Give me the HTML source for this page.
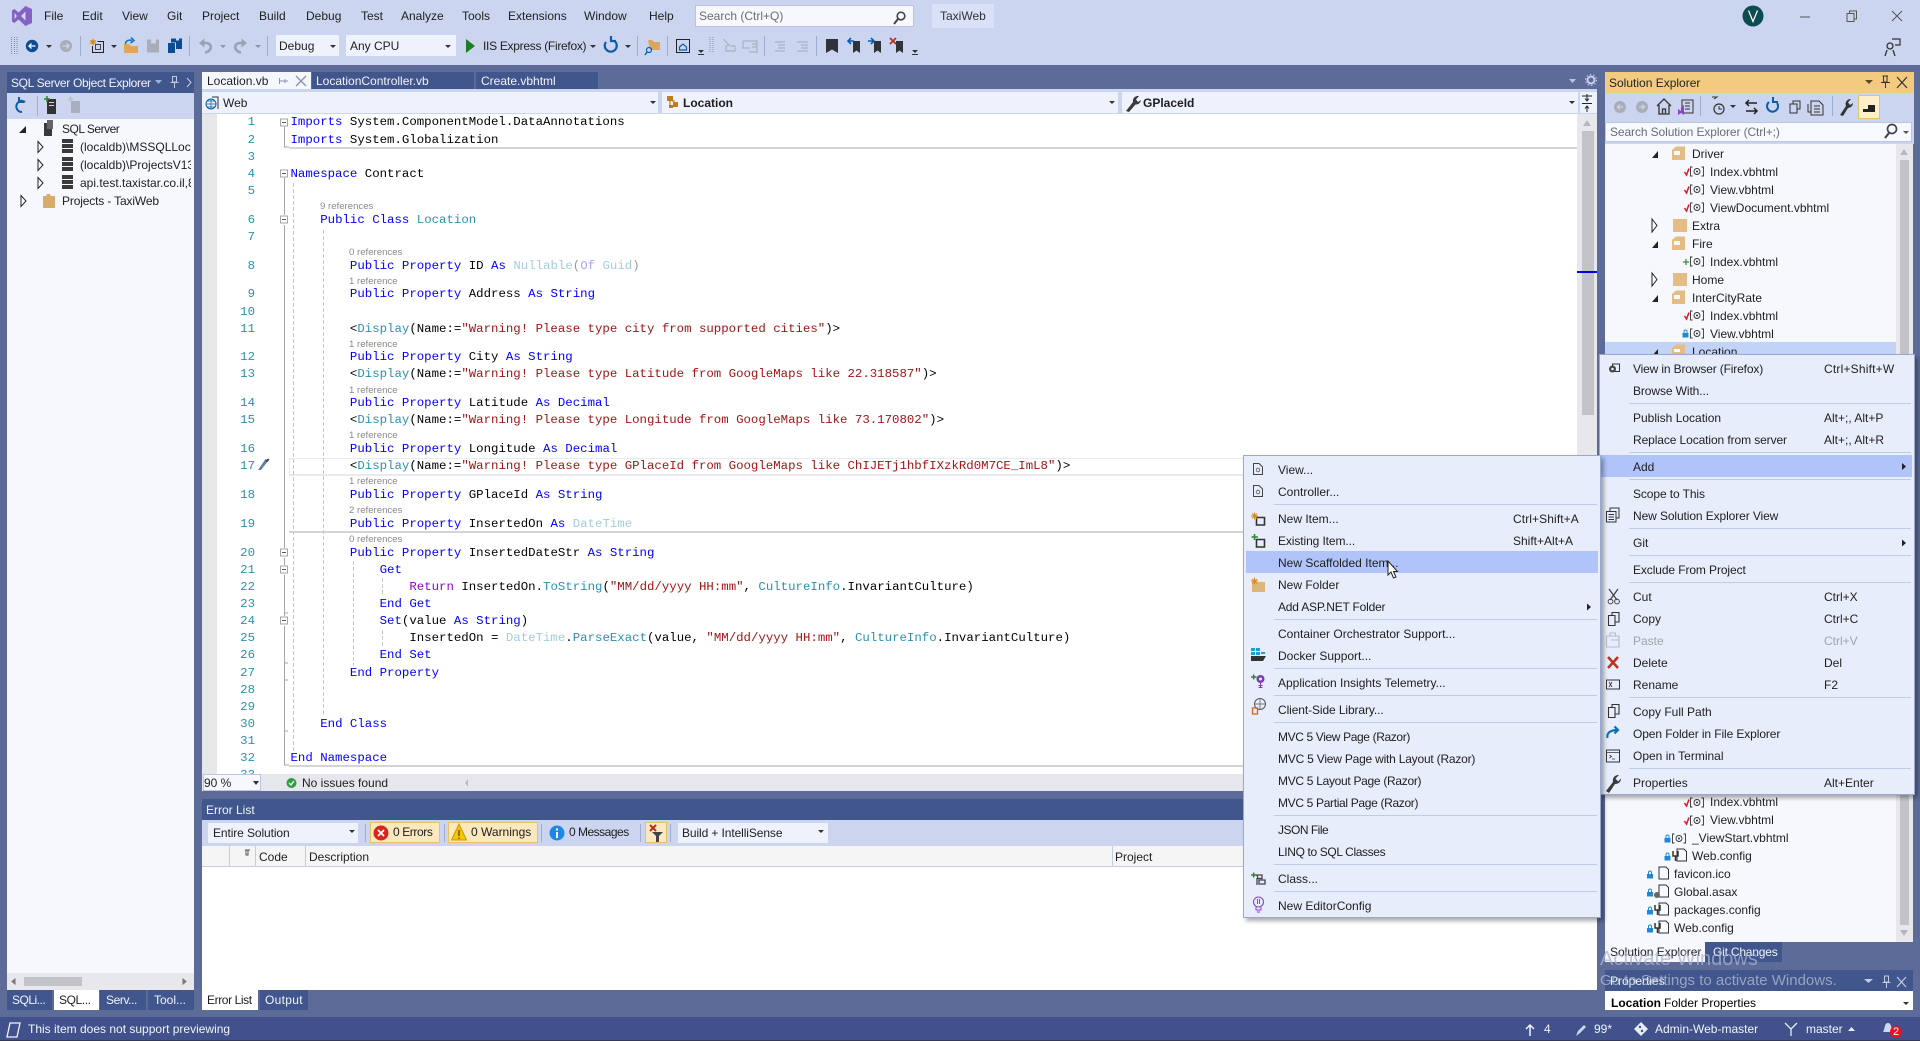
<!DOCTYPE html>
<html><head><meta charset="utf-8"><title>TaxiWeb</title>
<style>
html,body{margin:0;padding:0;width:1920px;height:1041px;overflow:hidden;background:#5D6B99}
body{position:relative;font:12px/16px "Liberation Sans",sans-serif;color:#1E1E1E}
.b{position:absolute}
.t{position:absolute;white-space:pre;line-height:16px;height:16px}
.w{color:#F2F4FB}
.d{color:#A0A3A8}
.c{position:absolute;white-space:pre;font:12.38px/17px "Liberation Mono",monospace;height:17px;left:290.5px;color:#000;margin-top:1px}
.n{position:absolute;width:40px;left:215px;text-align:right;font:12.38px/17px "Liberation Mono",monospace;color:#2B91AF;height:17px;margin-top:1px}
.r{position:absolute;font-size:9.6px;line-height:12px;height:12px;color:#8A8A8A;white-space:pre;margin-top:1px}
.k{color:#0000FF}.y{color:#2B91AF}.s{color:#A31515}.f{color:#8F08C4}.o{color:#A3CDDD}.ok{color:#A6A6FF}.og{color:#9A9A9A}
svg{position:absolute;left:0;top:0;overflow:visible}
.m{position:absolute;background:#E8EDFC;border:1px solid #98A8CE;box-sizing:border-box;box-shadow:3px 3px 4px rgba(0,0,0,.33)}
.sp{position:absolute;height:1px;background:#C0CBE6}
.tr{position:absolute;overflow:hidden;white-space:pre;line-height:16px;height:16px}
</style></head><body>

<!-- chrome -->
<div class="b" style="left:0;top:0;width:1920px;height:65px;background:#CCD5F0"></div>
<div class="b" style="left:695px;top:5px;width:219px;height:22px;background:#F6F8FE;border:1px solid #B9C3DF;box-sizing:border-box"></div>
<div class="b" style="left:932px;top:4px;width:62px;height:24px;background:#D9E0F8"></div>
<div class="b" style="left:276px;top:35px;width:63px;height:21px;background:#EEF2FC"></div>
<div class="b" style="left:346px;top:35px;width:110px;height:21px;background:#EEF2FC"></div>

<span class="t" style="left:44px;top:8px">File</span><span class="t" style="left:82px;top:8px">Edit</span><span class="t" style="left:122px;top:8px">View</span><span class="t" style="left:167px;top:8px">Git</span><span class="t" style="left:202px;top:8px">Project</span><span class="t" style="left:259px;top:8px">Build</span><span class="t" style="left:306px;top:8px">Debug</span><span class="t" style="left:361px;top:8px">Test</span><span class="t" style="left:401px;top:8px">Analyze</span><span class="t" style="left:462px;top:8px">Tools</span><span class="t" style="left:508px;top:8px">Extensions</span><span class="t" style="left:584px;top:8px">Window</span><span class="t" style="left:649px;top:8px">Help</span>
<span class="t" style="left:699px;top:8px;color:#6D6D6D">Search (Ctrl+Q)</span>
<span class="t" style="left:940px;top:8px;color:#333">TaxiWeb</span>
<span class="t" style="left:279px;top:38px">Debug</span><span class="t" style="left:350px;top:38px">Any CPU</span><span class="t" style="left:483px;top:38px;letter-spacing:-.29px">IIS Express (Firefox)</span>

<!-- left panel -->
<div class="b" style="left:7px;top:72px;width:187px;height:21px;background:#40568D"></div>
<div class="b" style="left:7px;top:93px;width:187px;height:26px;background:#CCD5F0"></div>
<div class="b" style="left:7px;top:119px;width:187px;height:854px;background:#F6F8FD"></div>
<div class="b" style="left:7px;top:973px;width:187px;height:17px;background:#E8E8EC"></div>
<div class="b" style="left:24px;top:977px;width:58px;height:9px;background:#C2C3C9"></div>
<span class="t w" style="left:11px;top:75px;letter-spacing:-.33px">SQL Server Object Explorer</span>
<span class="t" style="left:62px;top:121px;letter-spacing:-.5px">SQL Server</span>
<span class="tr" style="left:80px;top:139px;width:111px">(localdb)\MSSQLLocalDB</span>
<span class="tr" style="left:80px;top:157px;width:111px">(localdb)\ProjectsV13</span>
<span class="tr" style="left:80px;top:175px;width:111px">api.test.taxistar.co.il,8</span>
<span class="t" style="left:62px;top:193px;letter-spacing:-.15px">Projects - TaxiWeb</span>
<div class="b" style="left:7px;top:990px;width:45px;height:20px;background:#40568D"></div><div class="b" style="left:54px;top:990px;width:45px;height:20px;background:#fff"></div><div class="b" style="left:100px;top:990px;width:46px;height:20px;background:#40568D"></div><div class="b" style="left:148px;top:990px;width:46px;height:20px;background:#40568D"></div>
<span class="t w" style="left:12px;top:992px;letter-spacing:-.5px">SQLi...</span><span class="t" style="left:59px;top:992px;letter-spacing:-.4px">SQL...</span><span class="t w" style="left:106px;top:992px;letter-spacing:-.4px">Serv...</span><span class="t w" style="left:154px;top:992px">Tool...</span>

<!-- tabs -->
<div class="b" style="left:202px;top:72px;width:109px;height:18px;background:#F5F7FD"></div>
<div class="b" style="left:312px;top:72px;width:162px;height:17px;background:#40568D"></div>
<div class="b" style="left:476px;top:72px;width:122px;height:17px;background:#40568D"></div>
<div class="b" style="left:202px;top:89px;width:1395px;height:3px;background:#CCD5F0"></div>
<span class="t" style="left:207px;top:73px">Location.vb</span><span class="t w" style="left:316px;top:73px">LocationController.vb</span><span class="t w" style="left:481px;top:73px">Create.vbhtml</span>

<!-- nav -->
<div class="b" style="left:202px;top:92px;width:1395px;height:22px;background:#CCD5F0"></div>
<div class="b" style="left:202px;top:92px;width:456px;height:21px;background:#EEF2FC"></div>
<div class="b" style="left:662px;top:92px;width:456px;height:21px;background:#EEF2FC"></div>
<div class="b" style="left:1122px;top:92px;width:456px;height:21px;background:#EEF2FC"></div>
<div class="b" style="left:1580px;top:92px;width:17px;height:21px;background:#EEF2FC"></div>
<span class="t" style="left:223px;top:95px">Web</span><span class="t" style="left:683px;top:95px;font-weight:bold">Location</span><span class="t" style="left:1143px;top:95px;font-weight:bold">GPlaceId</span>

<!-- editor -->
<div class="b" style="left:202px;top:114px;width:1395px;height:660px;background:#fff;overflow:hidden"></div>
<div class="b" style="left:202px;top:114px;width:15px;height:660px;background:#E6E7E8"></div>
<div class="b" style="left:1577px;top:114px;width:20px;height:660px;background:#E8E8EC"></div>
<div class="b" style="left:1582px;top:131px;width:12px;height:284px;background:#C2C3C9"></div>
<div class="b" style="left:1577px;top:271px;width:20px;height:2px;background:#0000E0"></div>
<div class="b" style="left:289px;top:147px;width:1288px;height:1.5px;background:#D4D4D4"></div>
<div class="b" style="left:289px;top:531px;width:1288px;height:2px;background:#D4D4D4"></div>
<div class="b" style="left:289px;top:765px;width:1288px;height:2px;background:#D4D4D4"></div>
<div class="b" style="left:289px;top:457.5px;width:1288px;height:15px;border:solid #E9E9F2;border-width:1.5px 0 2px 1.5px"></div>

<svg width="1920" height="1041" fill="none">
<g stroke="#C9C9C9" stroke-dasharray="4 2"><path d="M293.5 183V753M323.5 230V716M353.5 561V666M382.5 578V596M382.5 630V646"/></g>
<path d="M284.5 127V147H289M284.5 178V215M284.5 225V548M284.5 558V565M284.5 575V616M284.5 626V765H289M284.5 613H288M284.5 663H288M284.5 680H288M284.5 731H288" stroke="#A5A5A5"/>
<g fill="#fff" stroke="#A5A5A5"><rect x="280.5" y="119" width="7" height="7"/><rect x="280.5" y="170" width="7" height="7"/><rect x="280.5" y="216" width="7" height="7"/><rect x="280.5" y="549" width="7" height="7"/><rect x="280.5" y="566" width="7" height="7"/><rect x="280.5" y="617" width="7" height="7"/></g>
<path d="M282 122.5H286M282 173.5H286M282 219.5H286M282 552.5H286M282 569.5H286M282 620.5H286" stroke="#555"/>
<path d="M258 470L261 470L268 461L265.5 459Z" fill="#5C7FA8"/><path d="M265 461L268 458.5L269.5 459.5L267.5 462Z" fill="#444"/>
</svg>

<span class="n" style="top:113px">1</span><span class="n" style="top:131px">2</span><span class="n" style="top:148px">3</span><span class="n" style="top:165px">4</span><span class="n" style="top:182px">5</span><span class="n" style="top:211px">6</span><span class="n" style="top:228px">7</span><span class="n" style="top:257px">8</span><span class="n" style="top:285px">9</span><span class="n" style="top:303px">10</span><span class="n" style="top:320px">11</span><span class="n" style="top:348px">12</span><span class="n" style="top:365px">13</span><span class="n" style="top:394px">14</span><span class="n" style="top:411px">15</span><span class="n" style="top:440px">16</span><span class="n" style="top:457px">17</span><span class="n" style="top:486px">18</span><span class="n" style="top:515px">19</span><span class="n" style="top:544px">20</span><span class="n" style="top:561px">21</span><span class="n" style="top:578px">22</span><span class="n" style="top:595px">23</span><span class="n" style="top:612px">24</span><span class="n" style="top:629px">25</span><span class="n" style="top:646px">26</span><span class="n" style="top:664px">27</span><span class="n" style="top:681px">28</span><span class="n" style="top:698px">29</span><span class="n" style="top:715px">30</span><span class="n" style="top:732px">31</span><span class="n" style="top:749px">32</span><span class="n" style="top:766px">33</span>

<div class="c" style="top:113px"><span class="k">Imports</span> System.ComponentModel.DataAnnotations</div>
<div class="c" style="top:131px"><span class="k">Imports</span> System.Globalization</div>
<div class="c" style="top:165px"><span class="k">Namespace</span> Contract</div>
<span class="r" style="left:320px;top:200px">9 references</span>
<div class="c" style="top:211px">    <span class="k">Public Class</span> <span class="y">Location</span></div>
<span class="r" style="left:349px;top:246px">0 references</span>
<div class="c" style="top:257px">        <span class="k">Public Property</span> ID <span class="k">As</span> <span class="o">Nullable</span><span class="og">(</span><span class="ok">Of</span> <span class="o">Guid</span><span class="og">)</span></div>
<span class="r" style="left:349px;top:275px">1 reference</span>
<div class="c" style="top:285px">        <span class="k">Public Property</span> Address <span class="k">As String</span></div>
<div class="c" style="top:320px">        &lt;<span class="y">Display</span>(Name:=<span class="s">"Warning! Please type city from supported cities"</span>)&gt;</div>
<span class="r" style="left:349px;top:338px">1 reference</span>
<div class="c" style="top:348px">        <span class="k">Public Property</span> City <span class="k">As String</span></div>
<div class="c" style="top:365px">        &lt;<span class="y">Display</span>(Name:=<span class="s">"Warning! Please type Latitude from GoogleMaps like 22.318587"</span>)&gt;</div>
<span class="r" style="left:349px;top:384px">1 reference</span>
<div class="c" style="top:394px">        <span class="k">Public Property</span> Latitude <span class="k">As Decimal</span></div>
<div class="c" style="top:411px">        &lt;<span class="y">Display</span>(Name:=<span class="s">"Warning! Please type Longitude from GoogleMaps like 73.170802"</span>)&gt;</div>
<span class="r" style="left:349px;top:429px">1 reference</span>
<div class="c" style="top:440px">        <span class="k">Public Property</span> Longitude <span class="k">As Decimal</span></div>
<div class="c" style="top:457px">        &lt;<span class="y">Display</span>(Name:=<span class="s">"Warning! Please type GPlaceId from GoogleMaps like ChIJETj1hbfIXzkRd0M7CE_ImL8"</span>)&gt;</div>
<span class="r" style="left:349px;top:475px">1 reference</span>
<div class="c" style="top:486px">        <span class="k">Public Property</span> GPlaceId <span class="k">As String</span></div>
<span class="r" style="left:349px;top:504px">2 references</span>
<div class="c" style="top:515px">        <span class="k">Public Property</span> InsertedOn <span class="k">As</span> <span class="o">DateTime</span></div>
<span class="r" style="left:349px;top:533px">0 references</span>
<div class="c" style="top:544px">        <span class="k">Public Property</span> InsertedDateStr <span class="k">As String</span></div>
<div class="c" style="top:561px">            <span class="k">Get</span></div>
<div class="c" style="top:578px">                <span class="f">Return</span> InsertedOn.<span class="y">ToString</span>(<span class="s">"MM/dd/yyyy HH:mm"</span>, <span class="y">CultureInfo</span>.InvariantCulture)</div>
<div class="c" style="top:595px">            <span class="k">End Get</span></div>
<div class="c" style="top:612px">            <span class="k">Set</span>(value <span class="k">As String</span>)</div>
<div class="c" style="top:629px">                InsertedOn = <span class="o">DateTime</span>.<span class="y">ParseExact</span>(value, <span class="s">"MM/dd/yyyy HH:mm"</span>, <span class="y">CultureInfo</span>.InvariantCulture)</div>
<div class="c" style="top:646px">            <span class="k">End Set</span></div>
<div class="c" style="top:664px">        <span class="k">End Property</span></div>
<div class="c" style="top:715px">    <span class="k">End Class</span></div>
<div class="c" style="top:749px"><span class="k">End Namespace</span></div>

<!-- editor status -->
<div class="b" style="left:202px;top:774px;width:1395px;height:17px;background:#E6E7ED"></div>
<div class="b" style="left:203px;top:774px;width:58px;height:17px;background:#F6F8FE;border:1px solid #B9C6E4;box-sizing:border-box"></div>
<span class="t" style="left:204px;top:775px">90 %</span><span class="t" style="left:302px;top:775px">No issues found</span>

<!-- error list -->
<div class="b" style="left:202px;top:799px;width:1395px;height:21px;background:#40568D"></div>
<div class="b" style="left:202px;top:820px;width:1395px;height:26px;background:#CCD5F0"></div>
<div class="b" style="left:202px;top:846px;width:1395px;height:21px;background:#F5F5F5;border-bottom:1px solid #C7CCDD;box-sizing:border-box"></div>
<div class="b" style="left:202px;top:867px;width:1395px;height:123px;background:#fff"></div>
<span class="t w" style="left:206px;top:802px">Error List</span>
<div class="b" style="left:208px;top:823px;width:150px;height:20px;background:#EEF2FC"></div>
<div class="b" style="left:678px;top:823px;width:150px;height:20px;background:#EEF2FC"></div>
<div class="b" style="left:370px;top:822px;width:70px;height:21px;background:#FBE8BE;border:1px solid #E5C365;box-sizing:border-box"></div>
<div class="b" style="left:448px;top:822px;width:90px;height:21px;background:#FBE8BE;border:1px solid #E5C365;box-sizing:border-box"></div>
<div class="b" style="left:645px;top:822px;width:22px;height:21px;background:#FBE8BE;border:1px solid #E5C365;box-sizing:border-box"></div>
<span class="t" style="left:213px;top:825px;letter-spacing:-.1px">Entire Solution</span><span class="t" style="left:393px;top:824px;letter-spacing:-.4px">0 Errors</span><span class="t" style="left:471px;top:824px">0 Warnings</span><span class="t" style="left:569px;top:824px;letter-spacing:-.5px">0 Messages</span><span class="t" style="left:682px;top:825px;letter-spacing:-.1px">Build + IntelliSense</span>
<span class="t" style="left:259px;top:849px">Code</span><span class="t" style="left:309px;top:849px">Description</span><span class="t" style="left:1115px;top:849px">Project</span>
<div class="b" style="left:202px;top:990px;width:56px;height:20px;background:#fff"></div>
<div class="b" style="left:260px;top:990px;width:48px;height:20px;background:#40568D"></div>
<span class="t" style="left:207px;top:992px;letter-spacing:-.4px">Error List</span><span class="t w" style="left:265px;top:992px;letter-spacing:.3px">Output</span>

<!-- solution explorer -->
<div class="b" style="left:1605px;top:72px;width:309px;height:21px;background:#F2CB80"></div>
<div class="b" style="left:1605px;top:93px;width:309px;height:51px;background:#CCD5F0"></div>
<div class="b" style="left:1605px;top:122px;width:307px;height:20px;background:#F7F9FE;border:1px solid #B9C6E4;box-sizing:border-box"></div>
<div class="b" style="left:1858px;top:95px;width:22px;height:24px;background:#FDEFC9;border:1px solid #E5C365;box-sizing:border-box"></div>
<div class="b" style="left:1605px;top:144px;width:291px;height:798px;background:#F6F8FD"></div>
<div class="b" style="left:1896px;top:144px;width:17px;height:798px;background:#E8E8EC"></div>
<div class="b" style="left:1900px;top:160px;width:9px;height:765px;background:#C2C3C9"></div>
<div class="b" style="left:1605px;top:342px;width:291px;height:14px;background:#C2D3F8"></div>
<span class="t" style="left:1609px;top:75px;color:#222">Solution Explorer</span>
<span class="t" style="left:1610px;top:124px;color:#6D6D6D;letter-spacing:-.1px">Search Solution Explorer (Ctrl+;)</span>
<span class="t" style="left:1692px;top:146px">Driver</span><span class="t" style="left:1710px;top:164px">Index.vbhtml</span><span class="t" style="left:1710px;top:182px">View.vbhtml</span><span class="t" style="left:1710px;top:200px">ViewDocument.vbhtml</span><span class="t" style="left:1692px;top:218px">Extra</span><span class="t" style="left:1692px;top:236px">Fire</span><span class="t" style="left:1710px;top:254px">Index.vbhtml</span><span class="t" style="left:1692px;top:272px">Home</span><span class="t" style="left:1692px;top:290px">InterCityRate</span><span class="t" style="left:1710px;top:308px">Index.vbhtml</span><span class="t" style="left:1710px;top:326px">View.vbhtml</span><span class="t" style="left:1692px;top:344px">Location</span>
<span class="t" style="left:1710px;top:794px">Index.vbhtml</span><span class="t" style="left:1710px;top:812px">View.vbhtml</span><span class="t" style="left:1692px;top:830px">_ViewStart.vbhtml</span><span class="t" style="left:1692px;top:848px">Web.config</span><span class="t" style="left:1674px;top:866px">favicon.ico</span><span class="t" style="left:1674px;top:884px">Global.asax</span><span class="t" style="left:1674px;top:902px">packages.config</span><span class="t" style="left:1674px;top:920px">Web.config</span>
<div class="b" style="left:1605px;top:942px;width:100px;height:20px;background:#F6F8FD"></div>
<div class="b" style="left:1705px;top:942px;width:77px;height:20px;background:#40568D"></div>
<span class="t" style="left:1610px;top:944px">Solution Explorer</span><span class="t w" style="left:1713px;top:944px;letter-spacing:-.2px">Git Changes</span>
<div class="b" style="left:1605px;top:970px;width:308px;height:21px;background:#40568D"></div>
<div class="b" style="left:1605px;top:991px;width:308px;height:19px;background:#fff"></div>
<span class="t w" style="left:1610px;top:973px">Properties</span>
<span class="t" style="left:1611px;top:995px;font-weight:bold;color:#000">Location</span><span class="t" style="left:1664px;top:995px;color:#000">Folder Properties</span>

<!-- status bar -->
<div class="b" style="left:0;top:1017px;width:1920px;height:23px;background:#40518B"></div>
<div class="b" style="left:0;top:1040px;width:1920px;height:1px;background:#333A4F"></div>
<span class="t w" style="left:28px;top:1021px">This item does not support previewing</span>
<span class="t w" style="left:1544px;top:1021px">4</span><span class="t w" style="left:1594px;top:1021px">99*</span><span class="t w" style="left:1655px;top:1021px">Admin-Web-master</span><span class="t w" style="left:1806px;top:1021px">master</span>

<!-- shell icons -->
<svg width="1920" height="1041" fill="none">
<path fill-rule="evenodd" fill="#8661C5" d="M25.5 6L32 9V23L25.5 26L18.5 19.5L14.5 23L12 21.5V10.5L14.5 9L18.5 12.5ZM25.5 11.5L21 16L25.5 20.5ZM14.5 13V19L17 16Z"/>
<circle cx="901" cy="16" r="3.8" stroke="#444" stroke-width="1.6"/><path d="M898 19L894 24" stroke="#444" stroke-width="2"/>
<circle cx="1753" cy="16" r="10.5" fill="#0D4B50"/><path d="M1748.5 10.5L1753 21.5L1757.5 10.5" stroke="#fff" stroke-width="1.2"/>
<path d="M1800 17H1810" stroke="#555"/><path d="M1847 13.5h7v8h-7zM1849.5 13.5v-2.500h7v8h-2.500" stroke="#555"/><path d="M1892 11L1902 21M1902 11L1892 21" stroke="#555"/>
<circle cx="1890" cy="46" r="3" stroke="#333" stroke-width="1.3"/><path d="M1885 56L1887 50M1895 56L1893 50" stroke="#333" stroke-width="1.3"/><path d="M1892 39H1900V45H1895" stroke="#333" stroke-width="1.2"/>
<path d="M11.500 37V54M14.500 37V54M17 37V54" stroke="#7A86A8" stroke-dasharray="1 1"/>
<circle cx="32" cy="46" r="6.2" fill="#0E4C92"/><path d="M35.500 46H29M31.500 43.500L29 46L31.500 48.500" stroke="#fff" stroke-width="1.3"/>
<circle cx="66" cy="46" r="6" fill="#A9ADB5"/><path d="M62.500 46H69M66.500 43.500L69 46L66.500 48.500" stroke="#CCD5F0" stroke-width="1.3"/>
<path d="M46 45H52L49 48ZM111 45H117L114 48ZM590 45H596L593 48ZM625 45H631L628 48ZM330 45H336L333 48ZM445 45H451L448 48Z" fill="#333"/>
<path d="M255 45H261L258 48ZM220 45H226L223 48Z" fill="#8E96AB"/>
<path d="M80.500 36V56M189.500 36V56M267.500 36V56M637.500 36V56M667.500 36V56M764.500 36V56M816.500 36V56" stroke="#9FAECF"/>
<path d="M97.500 41.500H103.500V52.500H92.500V46" stroke="#222"/><rect x="95.500" y="44.500" width="5" height="5" stroke="#222" stroke-width=".8"/>
<path d="M93 38L94 40.500L96.500 40L95 42L96.500 44L94 43.500L93 46L92 43.500L89.500 44L91 42L89.500 40L92 40.500Z" fill="#D98A1E"/>
<path d="M124 44H129L131 46H138V53H124Z" fill="#DCA75A"/><path d="M125.500 44C125.500 40.500 129 39.500 132 40.500M131 37.500L134 40.500L130.500 43" stroke="#0E70C0" stroke-width="1.500"/>
<path d="M147 39.500H159V52.500H147Z" fill="#A9ADB5"/><rect x="151" y="39.500" width="5" height="4" fill="#CCD5F0"/>
<path d="M168 43H175V53H168Z" fill="#0E4C92"/><path d="M171 38.500H182V49H176V42.500H171Z" fill="#0E4C92"/><rect x="176" y="38.500" width="3" height="2" fill="#CCD5F0"/>
<path d="M203.500 43H206C212.500 43 212.500 51.500 205 52.500" stroke="#9CA2B2" stroke-width="2.600"/><path d="M199 43L204.500 38.500V47.500Z" fill="#9CA2B2"/>
<path d="M242.500 43H240C233.500 43 233.500 51.500 241 52.500" stroke="#9CA2B2" stroke-width="2.600"/><path d="M247 43L241.500 38.500V47.500Z" fill="#9CA2B2"/>
<path d="M466 39L475 46L466 53Z" fill="#1E7D1E"/>
<path d="M606 42A6 6 0 1 0 614.500 41M611 36V41H616" stroke="#0E5CA6" stroke-width="2.200"/>
<path d="M648 40H652L654 42H660V50H650Z" fill="#DCA75A"/><circle cx="649" cy="50" r="2.500" stroke="#0E5CA6" stroke-width="1.200"/><path d="M647 52L645 55" stroke="#0E5CA6" stroke-width="1.500"/>
<rect x="676.500" y="39.500" width="13" height="13" stroke="#222"/><path d="M679.500 47L683 44L686.500 47V50H679.500Z" stroke="#0E5CA6" stroke-width="1.200"/>
<path d="M698 50H704L701 53ZM698 54H704V55H698ZM912 50H918L915 53ZM912 54H918V55H912Z" fill="#333"/>
<path d="M710 37V53M713 37V53" stroke="#8690AE" stroke-dasharray="1 1"/>
<path d="M723 39L729 45L726 46V51H735V46H730M743 41H757V52H749M743 41V48H750M752 44H757M752 47H757" stroke="#ABB0BE" stroke-width="1.200"/>
<path d="M775 42H785M778 45H785M778 48H785M775 51H785M797 42H808M801 45H808M801 48H808M797 51H808" stroke="#ABB0BE" stroke-width="1.200"/>
<path d="M826 39H838V53L832 49.500L826 53Z" fill="#2F3238"/>
<path d="M853 41H860V53L856.500 50.500L853 53Z" fill="#2F3238"/><path d="M854 41H848M851 38L848 41L851 44" stroke="#0E5CA6" stroke-width="1.600"/>
<path d="M874 41H881V53L877.500 50.500L874 53Z" fill="#2F3238"/><path d="M868 41H874M871 38L874 41L871 44" stroke="#0E5CA6" stroke-width="1.600"/>
<path d="M896 41H903V53L899.500 50.500L896 53Z" fill="#2F3238"/><path d="M890 38L896 44M896 38L890 44" stroke="#B5321E" stroke-width="1.800"/>
<!-- left panel -->
<path d="M155 80H162L158.500 84Z" fill="#9FB0D8"/><path d="M172 76.500H177M172.500 76.500V82H176.500V76.500M170.500 82.500H178.500M174.500 82.500V88" stroke="#C3CCE6"/><path d="M187 78L191 82.500L187 87" stroke="#C3CCE6"/>
<path d="M25 102A5.500 5.500 0 1 0 22 112M18 102A5.500 5.500 0 0 0 22 100M19 97V102H24" stroke="#0E5CA6" stroke-width="2"/>
<path d="M37.500 96V116" stroke="#9FAECF"/>
<rect x="47" y="99" width="9" height="15" fill="#333"/><rect x="49" y="102" width="5" height="1" fill="#CCD5F0"/><rect x="49" y="105" width="5" height="1" fill="#CCD5F0"/><path d="M44 99H50M47 96V102" stroke="#228B22" stroke-width="1.500"/>
<rect x="71" y="101" width="9" height="12" fill="#A9AFC0"/><path d="M68 99H73M70.500 96.500V101.500" stroke="#B5BCCC" stroke-width="1.300"/>
<path d="M26 126V133H19Z" fill="#222"/>
<rect x="44" y="123" width="8" height="13" fill="#3A3A3A"/><rect x="47" y="120" width="6" height="9" fill="#666"/>
<path d="M38 141.500L43 147L38 152.500ZM38 159.500L43 165L38 170.500ZM38 177.500L43 183L38 188.500Z" stroke="#222" fill="#fff"/>
<g fill="#3A3A3A"><rect x="62" y="139" width="11" height="4"/><rect x="62" y="144" width="11" height="4"/><rect x="62" y="149" width="11" height="4"/><rect x="62" y="157" width="11" height="4"/><rect x="62" y="162" width="11" height="4"/><rect x="62" y="167" width="11" height="4"/><rect x="62" y="175" width="11" height="4"/><rect x="62" y="180" width="11" height="4"/><rect x="62" y="185" width="11" height="4"/></g>
<path d="M21 195.500L26 201L21 206.500Z" stroke="#222" fill="#fff"/>
<path d="M43 196H46L47 194H50L51 196H55V208H43Z" fill="#D8AC6C"/>
<path d="M15 979L12 981.500L15 984Z M183 979L186 981.500L183 984Z" fill="#777" stroke="#777"/>
<!-- tab icons -->
<path d="M279.500 78V84M279.500 81H285M285 79V83M285 81H288" stroke="#8793B5"/><path d="M296 76L306 86M306 76L296 86" stroke="#8793B5" stroke-width="1.300"/>
<path d="M1569 79H1576L1572.500 83Z" fill="#B9C4E2"/><circle cx="1591" cy="80" r="3.500" stroke="#C9D2EA" stroke-width="2"/><circle cx="1591" cy="80" r="5.500" stroke="#C9D2EA" stroke-dasharray="1.500 2"/>
<circle cx="211" cy="104" r="5" stroke="#0E5CA6"/><path d="M206 104H216M211 99V109M207 101H215M207 107H215" stroke="#0E5CA6" stroke-width=".7"/><path d="M212 97H218V109" stroke="#333"/>
<path d="M650 101H656L653 104ZM1109 101H1115L1112 104ZM1569 101H1575L1572 104Z" fill="#333"/>
<g fill="#C27D1A"><rect x="667" y="96" width="6" height="5"/><rect x="673" y="102" width="5" height="5"/><rect x="669" y="105" width="4" height="3"/></g><path d="M670 100V106M672 101H675" stroke="#A86A10"/>
<path d="M1126 111L1133 102A5 5 0 0 1 1139 96L1136 99.500L1138 102L1141 100A5 5 0 0 1 1135.500 104.500L1129 112Z" fill="#3A3A3A"/>
<path d="M1582 96H1592M1582 103.500H1592M1587 94V101M1587 106V112M1585 98.500L1587 101L1589 98.500M1585 108.500L1587 106L1589 108.500" stroke="#222"/>
<path d="M1583 126L1587 120L1591 126Z" fill="#B5B7C0"/>
<!-- SE -->
<path d="M1865 80H1873L1869 84Z" fill="#5A4A20"/><path d="M1882.500 76H1888M1883.500 76V82H1887V76M1881 82.500H1890M1885.500 82.500V88" stroke="#333"/><path d="M1897 77L1907 88M1907 77L1897 88" stroke="#333" stroke-width="1.200"/>
<circle cx="1620" cy="107" r="6" fill="#A9ADB5"/><path d="M1623 107H1617.500M1620 104.500L1617.500 107L1620 109.500" stroke="#CCD5F0" stroke-width="1.200"/>
<circle cx="1642" cy="107" r="6" fill="#A9ADB5"/><path d="M1639 107H1644.500M1642 104.500L1644.500 107L1642 109.500" stroke="#CCD5F0" stroke-width="1.200"/>
<path d="M1657 106L1664 99L1671 106M1659 105V114H1669V105M1662.500 114V109H1665.500V114" stroke="#333" stroke-width="1.300"/>
<rect x="1682" y="100" width="11" height="13" stroke="#333"/><path d="M1685 103H1690M1685 106H1690M1685 109H1690" stroke="#333"/><path d="M1678 109L1681 111V107L1684 105V115L1681 113L1678 115Z" fill="#8E44C4"/>
<path d="M1700.500 96V116M1832.500 96V116" stroke="#9FAECF"/>
<circle cx="1719" cy="109" r="5" stroke="#333" stroke-width="1.200"/><path d="M1719 106V109H1722M1712 97H1717L1714 99" stroke="#333"/>
<path d="M1730 105H1736L1733 108Z" fill="#333"/>
<path d="M1746 103H1757M1749 100L1746 103L1749 106M1757 111H1746M1754 108L1757 111L1754 114" stroke="#222" stroke-width="1.500"/>
<path d="M1769 102A5.500 5.500 0 1 0 1777 103M1773 97V102H1778" stroke="#0E5CA6" stroke-width="2"/>
<path d="M1790 104H1797V113H1790ZM1793 104V101H1800V109H1797" stroke="#333"/>
<path d="M1811 101H1819L1823 105V115H1811ZM1808 104V112H1811" stroke="#333"/><path d="M1814 106H1820M1814 109H1820M1814 112H1820" stroke="#333"/>
<path d="M1840 115L1846 106A5 5 0 0 1 1851 99L1848 102.500L1850 105L1853 103A5 5 0 0 1 1848 108L1843 116Z" fill="#333"/>
<path d="M1863 109H1875V112H1863ZM1868 109V105H1875V109" fill="#222"/>
<circle cx="1892" cy="129" r="4.500" stroke="#444" stroke-width="1.700"/><path d="M1889 133L1885 138" stroke="#444" stroke-width="2.200"/><path d="M1903 131H1909L1906 134Z" fill="#555"/>
<path d="M1900 155L1904 149L1908 155Z M1900 930L1904 936L1908 930Z" fill="#B5B7C0"/>
<path d="M1658 151V158H1652ZM1658 241V248H1652ZM1658 295V302H1652ZM1658 349V356H1652Z" fill="#222"/>
<path d="M1652 219L1657 225.500L1652 232ZM1652 273L1657 279.500L1652 286Z" stroke="#222" fill="#fff"/>
<g fill="#E3BD84"><path d="M1672 150L1676 146.500H1685V160H1672Z M1672 240L1676 236.500H1685V250H1672Z M1672 294L1676 290.500H1685V304H1672Z M1672 348L1676 344.500H1685V354H1672Z"/><rect x="1673" y="219" width="14" height="13"/><rect x="1673" y="273" width="14" height="13"/></g>
<path d="M1674 151H1680V155H1674ZM1674 241H1680V245H1674ZM1674 295H1680V299H1674ZM1674 349H1680V352H1674Z" fill="#F6F8FD"/>
<g stroke="#333" stroke-width=".9"><path d="M1692.500 167H1690.500V176H1692.500M1701.500 167H1703.500V176H1701.500M1692.500 185H1690.500V194H1692.500M1701.500 185H1703.500V194H1701.500M1692.500 203H1690.500V212H1692.500M1701.500 203H1703.500V212H1701.500M1692.500 257H1690.500V266H1692.500M1701.500 257H1703.500V266H1701.500M1692.500 311H1690.500V320H1692.500M1701.500 311H1703.500V320H1701.500M1692.500 329H1690.500V338H1692.500M1701.500 329H1703.500V338H1701.500M1692.500 798H1690.500V807H1692.500M1701.500 798H1703.500V807H1701.500M1692.500 816H1690.500V825H1692.500M1701.500 816H1703.500V825H1701.500M1674.500 834H1672.500V843H1674.500M1683.500 834H1685.500V843H1683.500"/><g><circle cx="1697" cy="171.500" r="3"/><circle cx="1697" cy="189.500" r="3"/><circle cx="1697" cy="207.500" r="3"/><circle cx="1697" cy="261.500" r="3"/><circle cx="1697" cy="315.500" r="3"/><circle cx="1697" cy="333.500" r="3"/><circle cx="1697" cy="802.500" r="3"/><circle cx="1697" cy="820.500" r="3"/><circle cx="1679" cy="838.500" r="3"/></g></g>
<g fill="#333"><circle cx="1697" cy="171.500" r="1"/><circle cx="1697" cy="189.500" r="1"/><circle cx="1697" cy="207.500" r="1"/><circle cx="1697" cy="261.500" r="1"/><circle cx="1697" cy="315.500" r="1"/><circle cx="1697" cy="333.500" r="1"/><circle cx="1697" cy="802.500" r="1"/><circle cx="1697" cy="820.500" r="1"/><circle cx="1679" cy="838.500" r="1"/></g>
<path d="M1684.500 172L1686.500 175L1689 168.500M1684.500 190L1686.500 193L1689 186.500M1684.500 208L1686.500 211L1689 204.500M1684.500 316L1686.500 319L1689 312.500M1684.500 803L1686.500 806L1689 799.500M1684.500 821L1686.500 824L1689 817.500" stroke="#E81123" stroke-width="1.500"/>
<path d="M1683 262H1689M1686 259V265" stroke="#339933" stroke-width="1.300"/>
<g fill="#1E88D8"><rect x="1682.500" y="333" width="6" height="4.500"/><rect x="1664.500" y="838" width="6" height="4.500"/><rect x="1664.500" y="856" width="6" height="4.500"/><rect x="1647" y="874" width="6" height="4.500"/><rect x="1647" y="892" width="6" height="4.500"/><rect x="1647" y="910" width="6" height="4.500"/><rect x="1647" y="928" width="6" height="4.500"/></g>
<path d="M1684 333V331.500A1.500 1.500 0 0 1 1687 331.500V333M1666 838V836.500A1.500 1.500 0 0 1 1669 836.500V838M1666 856V854.500A1.500 1.500 0 0 1 1669 854.500V856M1648.500 874V872.500A1.500 1.500 0 0 1 1651.500 872.500V874M1648.500 892V890.500A1.500 1.500 0 0 1 1651.500 890.500V892M1648.500 910V908.500A1.500 1.500 0 0 1 1651.500 908.500V910M1648.500 928V926.500A1.500 1.500 0 0 1 1651.500 926.500V928" stroke="#1E88D8"/>
<g stroke="#333" fill="none"><path d="M1677 849H1684L1686.500 851.500V861H1677ZM1659 867H1666L1668.500 869.500V879H1659ZM1659 885H1666L1668.500 887.500V897H1659ZM1659 903H1666L1668.500 905.500V915H1659ZM1659 921H1666L1668.500 923.500V933H1659Z"/></g>
<path d="M1673 851V856H1678V851M1675.500 856V861M1655 905V910H1660V905M1657.500 910V915M1655 923V928H1660V923M1657.500 928V933" stroke="#333" stroke-width="1.500"/><circle cx="1657" cy="895" r="3" fill="#666"/>
<!-- error list -->
<path d="M818 830H824L821 833ZM349 830H355L352 833Z" fill="#333"/>
<path d="M365.500 824V842M444.500 824V842M541.500 824V842M640.500 824V842M670.500 824V842" stroke="#9FAECF"/>
<circle cx="381" cy="833" r="7.500" fill="#D7261E"/><path d="M378 830L384 836M384 830L378 836" stroke="#fff" stroke-width="1.800"/>
<path d="M459 824L466.500 840H451.500Z" fill="#F7C600" stroke="#C79B00"/><path d="M459 830V836M459 837.500V839" stroke="#222"/>
<circle cx="557" cy="833" r="7.500" fill="#1E88E5"/><path d="M557 832V838M557 828.500V830.500" stroke="#fff" stroke-width="2"/>
<path d="M650 825L656 831M656 825L650 831" stroke="#B5321E" stroke-width="2"/><path d="M652 832H663L659 836V842H656V836Z" fill="#444"/>
<path d="M229.500 846V866M255.500 846V866M305.500 846V866M1112.500 846V866" stroke="#C7CCDD"/><path d="M245 850H250M246 850V855H248V850" stroke="#555"/>
<circle cx="291.500" cy="783" r="5" fill="#2E9E3E"/><path d="M289 783L291 785L294 781" stroke="#fff" stroke-width="1.300"/>
<path d="M468 779L465 783L468 787Z" fill="#B9BCC6"/><path d="M253 781H259L256 785Z" fill="#333"/>
<!-- props -->
<path d="M1864 979H1873L1868.500 983Z" fill="#C3CCE6"/><path d="M1884 976H1889M1884.500 976V982H1888.500V976M1882.500 982.500H1890.500M1886.500 982.500V988" stroke="#C3CCE6"/><path d="M1897 977L1906 987M1906 977L1897 987" stroke="#C3CCE6" stroke-width="1.200"/>
<path d="M1903 1002H1909L1906 1005Z" fill="#333"/>
<!-- status -->
<path d="M10 1023H20L17 1037H7Z" stroke="#F2F4FB" stroke-width="1.300"/>
<path d="M1530 1036V1025M1526 1029L1530 1025L1534 1029" stroke="#F2F4FB" stroke-width="1.500"/>
<path d="M1576 1036L1578 1031L1584 1025L1586 1027L1580 1033Z" fill="#D2D8EC"/>
<path d="M1641 1022L1648 1029L1641 1036L1634 1029Z" fill="#E8ECF7"/><circle cx="1640" cy="1027" r="1.200" fill="#40518B"/><circle cx="1642" cy="1031" r="1.200" fill="#40518B"/>
<path d="M1791 1036V1029L1785 1023M1791 1029L1797 1023" stroke="#E8ECF7" stroke-width="1.300"/>
<path d="M1848 1031H1855L1851.500 1027Z" fill="#E8ECF7"/>
<path d="M1883 1032C1885 1030 1884 1023 1888 1023C1892 1023 1891 1030 1893 1032Z" fill="#D2D8EC"/>
<circle cx="1896" cy="1032" r="6" fill="#E81123"/>
</svg>
<span class="t" style="left:1893px;top:1024px;color:#fff;font-size:11px">2</span>

<!-- Activate Windows watermark -->
<span class="t" style="left:1600px;top:949px;font-size:20px;line-height:20px;height:20px;color:rgba(170,178,205,.75)">Activate Windows</span>
<span class="t" style="left:1600px;top:973px;font-size:15px;color:rgba(175,183,208,.8)">Go to Settings to activate Windows.</span>

<!-- Menu B -->
<div class="m" style="left:1599px;top:354px;width:316px;height:441px"></div>
<div class="b" style="left:1601px;top:455px;width:311px;height:22px;background:#B0C4FA"></div>
<div class="sp" style="left:1629px;top:403px;width:282px"></div><div class="sp" style="left:1629px;top:452px;width:282px"></div><div class="sp" style="left:1629px;top:479px;width:282px"></div><div class="sp" style="left:1629px;top:528px;width:282px"></div><div class="sp" style="left:1629px;top:555px;width:282px"></div><div class="sp" style="left:1629px;top:582px;width:282px"></div><div class="sp" style="left:1629px;top:697px;width:282px"></div><div class="sp" style="left:1629px;top:768px;width:282px"></div>
<span class="t" style="left:1633px;top:361px;letter-spacing:-.15px">View in Browser (Firefox)</span><span class="t" style="left:1824px;top:361px;letter-spacing:.2px">Ctrl+Shift+W</span>
<span class="t" style="left:1633px;top:383px;letter-spacing:-.1px">Browse With...</span>
<span class="t" style="left:1633px;top:410px">Publish Location</span><span class="t" style="left:1824px;top:410px">Alt+;, Alt+P</span>
<span class="t" style="left:1633px;top:432px;letter-spacing:-.1px">Replace Location from server</span><span class="t" style="left:1824px;top:432px">Alt+;, Alt+R</span>
<span class="t" style="left:1633px;top:459px">Add</span>
<span class="t" style="left:1633px;top:486px;letter-spacing:-.1px">Scope to This</span>
<span class="t" style="left:1633px;top:508px;letter-spacing:-.1px">New Solution Explorer View</span>
<span class="t" style="left:1633px;top:535px">Git</span>
<span class="t" style="left:1633px;top:562px;letter-spacing:-.1px">Exclude From Project</span>
<span class="t" style="left:1633px;top:589px">Cut</span><span class="t" style="left:1824px;top:589px">Ctrl+X</span>
<span class="t" style="left:1633px;top:611px">Copy</span><span class="t" style="left:1824px;top:611px">Ctrl+C</span>
<span class="t d" style="left:1633px;top:633px">Paste</span><span class="t d" style="left:1824px;top:633px">Ctrl+V</span>
<span class="t" style="left:1633px;top:655px">Delete</span><span class="t" style="left:1824px;top:655px">Del</span>
<span class="t" style="left:1633px;top:677px">Rename</span><span class="t" style="left:1824px;top:677px">F2</span>
<span class="t" style="left:1633px;top:704px">Copy Full Path</span>
<span class="t" style="left:1633px;top:726px;letter-spacing:-.1px">Open Folder in File Explorer</span>
<span class="t" style="left:1633px;top:748px">Open in Terminal</span>
<span class="t" style="left:1633px;top:775px">Properties</span><span class="t" style="left:1824px;top:775px">Alt+Enter</span>

<!-- Menu A -->
<div class="m" style="left:1243px;top:455px;width:358px;height:463px"></div>
<div class="b" style="left:1246px;top:551px;width:352px;height:22px;background:#B0C4FA"></div>
<div class="sp" style="left:1274px;top:504px;width:323px"></div><div class="sp" style="left:1274px;top:619px;width:323px"></div><div class="sp" style="left:1274px;top:668px;width:323px"></div><div class="sp" style="left:1274px;top:695px;width:323px"></div><div class="sp" style="left:1274px;top:722px;width:323px"></div><div class="sp" style="left:1274px;top:815px;width:323px"></div><div class="sp" style="left:1274px;top:864px;width:323px"></div><div class="sp" style="left:1274px;top:891px;width:323px"></div>
<span class="t" style="left:1278px;top:462px">View...</span>
<span class="t" style="left:1278px;top:484px">Controller...</span>
<span class="t" style="left:1278px;top:511px">New Item...</span><span class="t" style="left:1513px;top:511px;letter-spacing:.1px">Ctrl+Shift+A</span>
<span class="t" style="left:1278px;top:533px;letter-spacing:-.1px">Existing Item...</span><span class="t" style="left:1513px;top:533px">Shift+Alt+A</span>
<span class="t" style="left:1278px;top:555px">New Scaffolded Item...</span>
<span class="t" style="left:1278px;top:577px">New Folder</span>
<span class="t" style="left:1278px;top:599px;letter-spacing:-.2px">Add ASP.NET Folder</span>
<span class="t" style="left:1278px;top:626px">Container Orchestrator Support...</span>
<span class="t" style="left:1278px;top:648px">Docker Support...</span>
<span class="t" style="left:1278px;top:675px">Application Insights Telemetry...</span>
<span class="t" style="left:1278px;top:702px;letter-spacing:-.1px">Client-Side Library...</span>
<span class="t" style="left:1278px;top:729px;letter-spacing:-.37px">MVC 5 View Page (Razor)</span>
<span class="t" style="left:1278px;top:751px;letter-spacing:-.21px">MVC 5 View Page with Layout (Razor)</span>
<span class="t" style="left:1278px;top:773px;letter-spacing:-.3px">MVC 5 Layout Page (Razor)</span>
<span class="t" style="left:1278px;top:795px;letter-spacing:-.33px">MVC 5 Partial Page (Razor)</span>
<span class="t" style="left:1278px;top:822px;letter-spacing:-.5px">JSON File</span>
<span class="t" style="left:1278px;top:844px;letter-spacing:-.37px">LINQ to SQL Classes</span>
<span class="t" style="left:1278px;top:871px">Class...</span>
<span class="t" style="left:1278px;top:898px">New EditorConfig</span>

<!-- menu icons -->
<svg width="1920" height="1041" fill="none">
<path d="M1902 463L1906 466.500L1902 470ZM1902 539.500L1906 543L1902 546.500ZM1587 603.500L1591 607L1587 610.500Z" fill="#222"/>
<!-- B icons -->
<rect x="1612.500" y="364" width="7" height="7.500" stroke="#333"/><circle cx="1612.500" cy="369" r="3.500" fill="#444"/><circle cx="1612.500" cy="369" r="1.300" fill="#E8EDFC"/>
<path d="M1606.500 511.500H1616V522H1606.500ZM1610 511V508H1619V518H1616M1608.500 514.500H1614M1608.500 517H1614M1608.500 519.500H1614" stroke="#333"/>
<path d="M1609 589L1617 600M1618 589L1610 600" stroke="#444" stroke-width="1.300"/><circle cx="1610.500" cy="601.500" r="2.400" stroke="#444"/><circle cx="1617" cy="601.500" r="2.400" stroke="#444"/>
<path d="M1608.500 615.500H1615V625.500H1608.500ZM1612 615V612.500H1619V622H1615" stroke="#333" stroke-width="1.100"/>
<path d="M1606.500 636H1619V647H1606.500ZM1610 636V633H1615.500V636M1611 640H1619" stroke="#B5BAC6" stroke-width="1.100"/>
<path d="M1608 657L1618 668M1618 657L1608 668" stroke="#C0321A" stroke-width="2.500"/>
<rect x="1606.500" y="680" width="13" height="9" stroke="#333"/><path d="M1609 682L1612 687M1612 682L1609 687" stroke="#333" stroke-width=".8"/>
<path d="M1608.500 707.500H1615V717.500H1608.500ZM1612 707V704.500H1619V714H1615" stroke="#333" stroke-width="1.100"/>
<path d="M1607.500 738C1606.500 733 1610 730 1618 730M1614.500 726.500L1618 730L1614.500 733.500" stroke="#0E6FB8" stroke-width="2.200"/>
<rect x="1606.500" y="750" width="13" height="12" stroke="#333"/><path d="M1607 752.500H1620M1609.500 755L1611.500 756.500L1609.500 758M1612 759H1615" stroke="#333" stroke-width=".8"/>
<path d="M1606 791L1613 782A5.500 5.500 0 0 1 1619 775L1615.500 778.500L1618 781.500L1621 778.500A5.500 5.500 0 0 1 1615 784L1609 793Z" fill="#3A3A3A"/>
<!-- A icons -->
<path d="M1253.500 463.500H1259L1262.500 467V474.500H1253.500Z" stroke="#444"/><circle cx="1258" cy="470" r="1.800" stroke="#555" stroke-width=".8"/>
<path d="M1253.500 485.500H1259L1262.500 489V496.500H1253.500Z" stroke="#444"/><circle cx="1258" cy="492" r="1.800" stroke="#555" stroke-width=".8"/>
<path d="M1256.500 517.500H1264.500V525H1256.500Z" stroke="#333" stroke-width="1.600"/><path d="M1251 516H1258M1254.500 512.500V519.500M1252 513.500L1257 518.500M1257 513.500L1252 518.500" stroke="#D98A1E"/>
<path d="M1256.500 539.500H1264.500V547H1256.500Z" stroke="#333" stroke-width="1.600"/><path d="M1251.500 537H1258M1254.500 534V540" stroke="#2A8A2A" stroke-width="1.600"/>
<path d="M1252 582H1265V592H1252Z" fill="#DDB57A"/><path d="M1251 581H1258M1254.500 577.500V584.500M1252 579L1257 583.500M1257 579L1252 583.500" stroke="#D98A1E"/>
<path d="M1251 656H1266L1263 661H1251Z" fill="#333"/><g fill="#1F9ED0"><rect x="1251" y="648" width="4" height="3"/><rect x="1256" y="648" width="4" height="3"/><rect x="1251" y="652" width="4" height="3"/><rect x="1256" y="652" width="4" height="3"/><rect x="1261" y="652" width="4" height="2"/></g>
<circle cx="1260.500" cy="679" r="4" fill="#7A3EB1"/><circle cx="1260.500" cy="679" r="1.500" fill="#E8EDFC"/><path d="M1260.500 683V688M1258.500 685.500H1262.500M1258.500 687.500H1262.500" stroke="#7A3EB1"/><path d="M1251 677H1256.500M1253.700 674.500V679.500" stroke="#2A8A2A" stroke-width="1.500"/>
<circle cx="1260" cy="704" r="5.500" stroke="#555"/><path d="M1255 704H1265M1260 698.500V709.500" stroke="#555" stroke-width=".7"/><rect x="1252.500" y="708" width="5" height="6" stroke="#D2651E" stroke-width="1.300"/>
<path d="M1251 875H1256.500M1253.700 872.500V877.500" stroke="#2A8A2A" stroke-width="1.500"/><path d="M1257 875H1262V878.500H1258ZM1259 880H1265V884H1259ZM1257 878V885" stroke="#444" stroke-width="1.300"/>
<circle cx="1258.500" cy="902" r="5" stroke="#8E44C4" stroke-width="1.100"/><path d="M1256 907V910H1261V907M1257 912H1260M1257.500 899V904M1259.500 899V904" stroke="#8E44C4"/>
<!-- cursor -->
<path d="M1388 561V575L1391 572L1393.500 578L1396 577L1393.500 571.500H1397.500Z" fill="#fff" stroke="#222"/>
</svg>
</body></html>
